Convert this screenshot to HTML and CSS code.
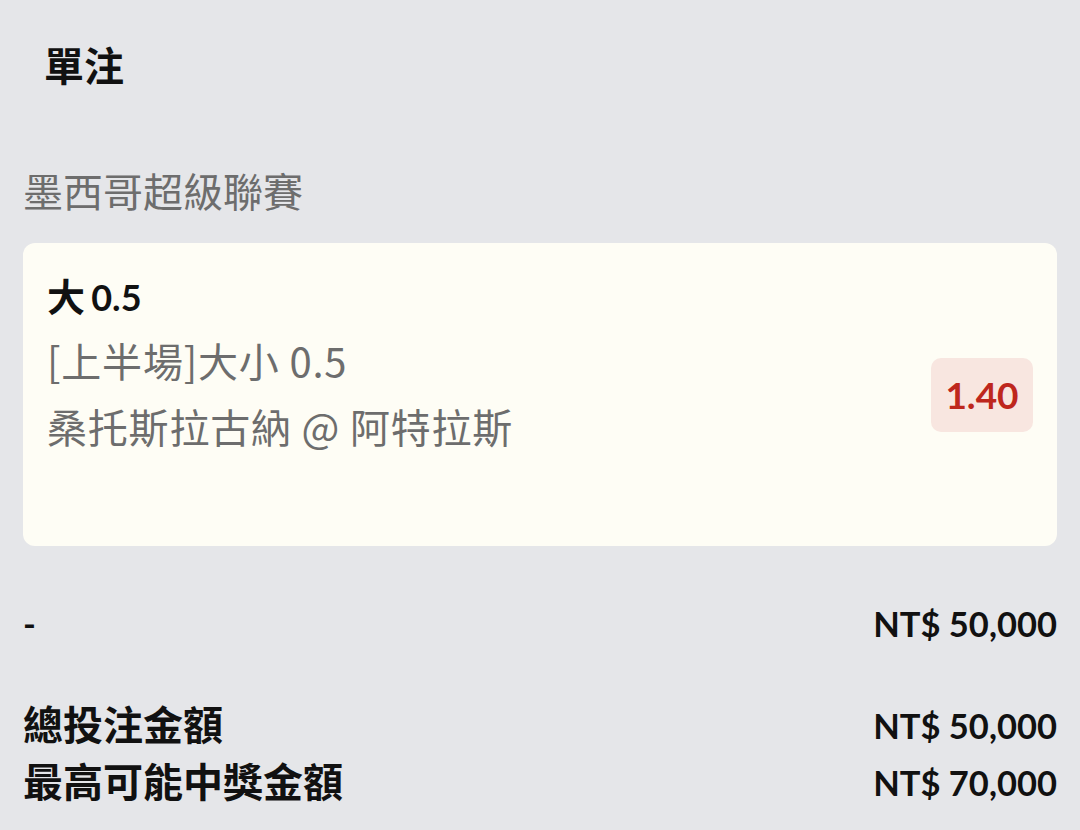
FILE: index.html
```html
<!DOCTYPE html>
<html lang="zh-Hant">
<head>
  <meta charset="UTF-8">
  <meta name="viewport" content="width=device-width, initial-scale=1.0">
  <title>單注</title>
  <link rel="stylesheet" href="styles.css">
</head>
<body>
  <div class="page">
    <h1 class="title">單注</h1>

    <div class="league">墨西哥超級聯賽</div>

    <div class="card">
      <div class="bet">
        <div class="pick">大 <span class="num">0.5</span></div>
        <div class="market">[上半場]大小 0.5</div>
        <div class="match">桑托斯拉古納 @ 阿特拉斯</div>
      </div>
      <div class="odds">1.40</div>
    </div>

    <div class="row stake">
      <span class="num">-</span>
      <span class="num">NT$ 50,000</span>
    </div>

    <div class="summary">
      <div class="row">
        <span>總投注金額</span>
        <span class="num">NT$ 50,000</span>
      </div>
      <div class="row">
        <span>最高可能中獎金額</span>
        <span class="num">NT$ 70,000</span>
      </div>
    </div>
  </div>
</body>
</html>
```

FILE: styles.css
```css
body { margin: 0; background: #e5e6e9; font-family: Lato, "Noto Sans CJK TC", sans-serif; font-size: 40px; color: #111; }
.page { padding: 0 23px; }
.num { font-family: Lato, sans-serif; font-size: 35px; }

.title { margin: 0; padding: 42px 0 0 21px; font-size: 40px; line-height: 48px; font-weight: bold; }
.league { margin-top: 76px; line-height: 48px; color: #6d6d6d; font-family: "Noto Sans CJK TC", sans-serif; }

.card { margin-top: 29px; display: flex; align-items: center; justify-content: space-between; padding: 23px 24px; background: #fefdf5; border-radius: 12px; }
.bet { margin-bottom: 64px; }
.pick { font-weight: bold; line-height: 60px; font-size: 38px; }
.pick .num { font-size: 36px; margin-left: -3px; }
.market, .match { line-height: 66px; color: #6d6d6d; font-family: "Noto Sans CJK TC", sans-serif; letter-spacing: 0.8px; }
.odds { width: 102px; height: 74px; display: flex; align-items: center; justify-content: center; background: #f8e6e0; border-radius: 10px; color: #be271d; font-family: Lato, sans-serif; font-size: 37px; font-weight: bold; }

.row { display: flex; justify-content: space-between; align-items: center; font-weight: bold; line-height: 48px; }
.row .num { font-size: 34.5px; }
.stake { margin-top: 54px; }
.summary { margin-top: 49px; }
.summary .row { line-height: 57px; }
```
